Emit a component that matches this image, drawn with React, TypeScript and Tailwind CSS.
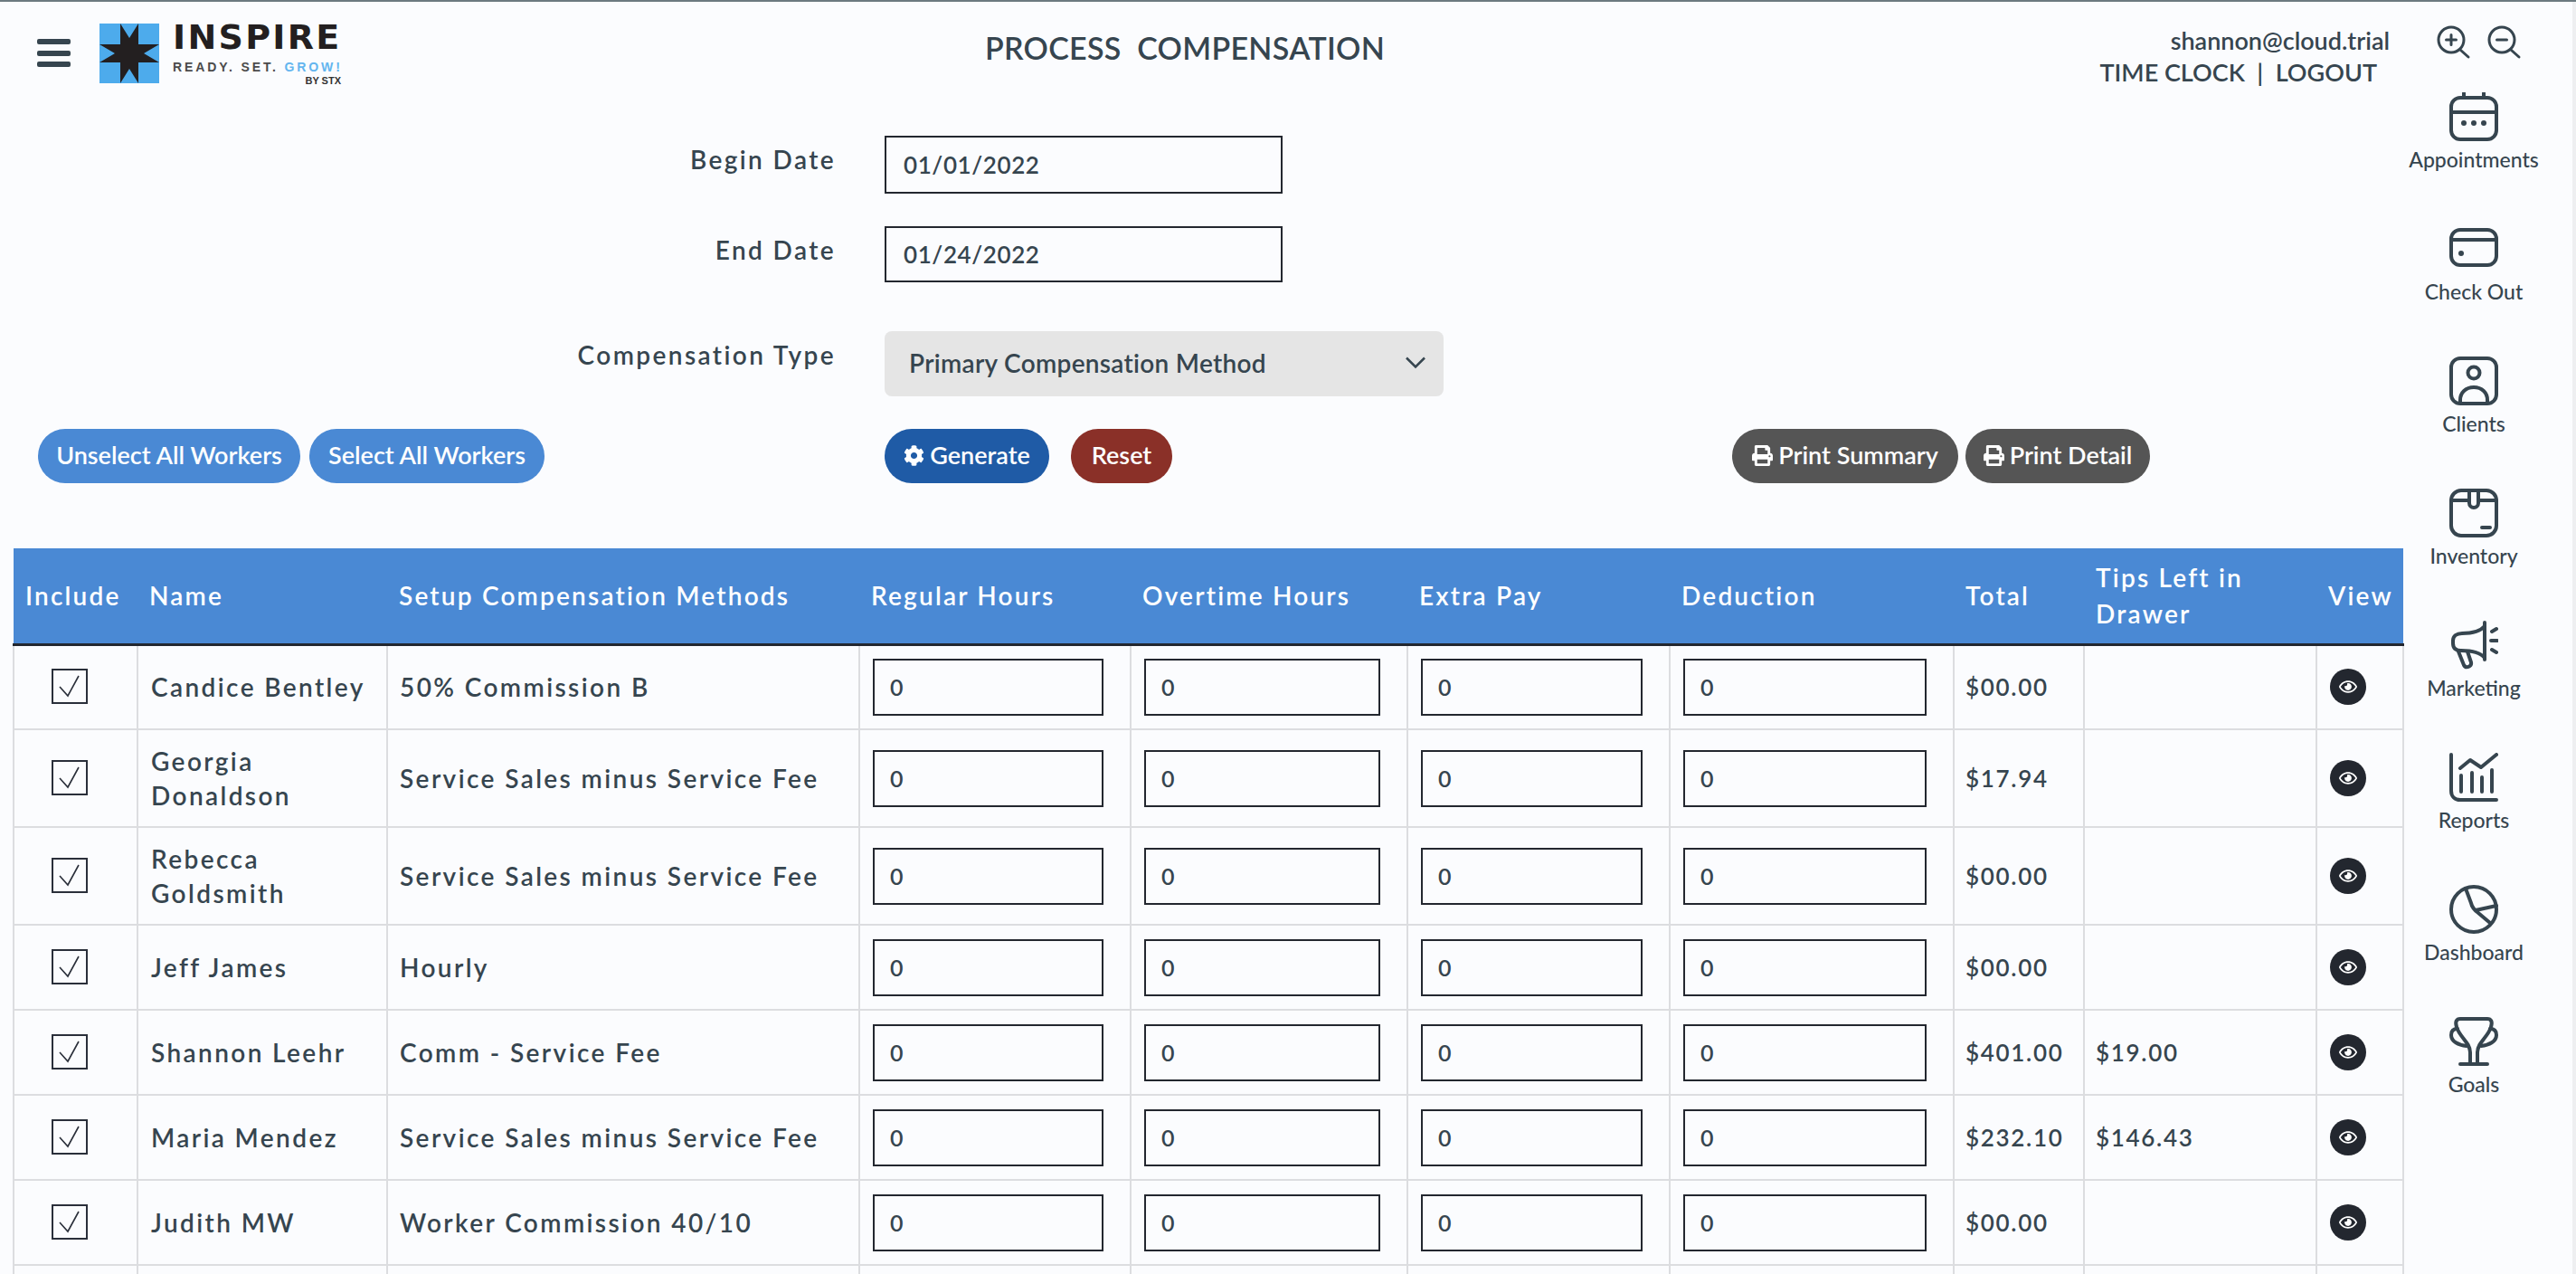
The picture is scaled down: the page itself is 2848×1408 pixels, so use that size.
import { FaCog, FaPrint, FaRegEye } from 'react-icons/fa';

interface Row {
  name: string;
  method: string;
  total: string;
  tips?: string;
}

const ROWS: Row[] = [
  { name: 'Candice Bentley', method: '50% Commission B', total: '$00.00' },
  { name: 'Georgia Donaldson', method: 'Service Sales minus Service Fee', total: '$17.94' },
  { name: 'Rebecca Goldsmith', method: 'Service Sales minus Service Fee', total: '$00.00' },
  { name: 'Jeff James', method: 'Hourly', total: '$00.00' },
  { name: 'Shannon Leehr', method: 'Comm - Service Fee', total: '$401.00', tips: '$19.00' },
  { name: 'Maria Mendez', method: 'Service Sales minus Service Fee', total: '$232.10', tips: '$146.43' },
  { name: 'Judith MW', method: 'Worker Commission 40/10', total: '$00.00' },
];

const COLUMNS = [137, 276, 522, 300, 306, 290, 314, 144, 257, 96];
const HEADERS = ['Include', 'Name', 'Setup Compensation Methods', 'Regular Hours', 'Overtime Hours', 'Extra Pay', 'Deduction', 'Total', 'Tips Left in Drawer', 'View'];

const RAIL = [
  {
    label: 'Appointments',
    icon: (
      <>
        <rect x="2" y="6" width="50" height="46" rx="10" />
        <path d="M2 22h50M16 1v5M38 1v5" />
        <circle cx="16" cy="34" r="3" fill="#36454f" stroke="none" />
        <circle cx="27" cy="34" r="3" fill="#36454f" stroke="none" />
        <circle cx="38" cy="34" r="3" fill="#36454f" stroke="none" />
      </>
    ),
  },
  {
    label: 'Check Out',
    icon: (
      <>
        <rect x="2" y="6" width="50" height="39" rx="10" />
        <path d="M2 17h50" />
        <circle cx="13" cy="32" r="3" fill="#36454f" stroke="none" />
      </>
    ),
  },
  {
    label: 'Clients',
    icon: (
      <>
        <rect x="2" y="2" width="50" height="50" rx="10" />
        <circle cx="27" cy="18" r="6.5" />
        <path d="M12 51v-3c0-8 6-14 15-14s15 6 15 14v3" />
      </>
    ),
  },
  {
    label: 'Inventory',
    icon: (
      <>
        <rect x="2" y="2" width="50" height="50" rx="11" />
        <path d="M2 13h20M32 13h20M22 2v14a5 5 0 0 0 10 0V2M36 43h9" />
      </>
    ),
  },
  {
    label: 'Marketing',
    icon: (
      <>
        <path d="M39 2v41M39 6c-5 6-13 8-25 8-6 0-10 3-10 8v3c0 5 3 8 9 8 12 0 21 2 26 8" />
        <path d="M10 34l6 15c2 4 9 2 8-3l-4-12M47 12l5-3M46 22h7M47 32l5 3" />
      </>
    ),
  },
  {
    label: 'Reports',
    icon: (
      <>
        <path d="M2 2v40c0 6 4 10 10 10h40" />
        <path d="M13 25v18M25 22v21M36 27v16M47 19v24" />
        <path d="M12 17l11-9 12 8L52 2" />
      </>
    ),
  },
  {
    label: 'Dashboard',
    icon: (
      <>
        <circle cx="27" cy="27" r="25" />
        <path d="M18 4l6 16c1 5 4 8 8 11l13 11M29 28l23-5" />
      </>
    ),
  },
  {
    label: 'Goals',
    icon: (
      <>
        <path d="M23 50V39C23 28 11 22 8 11c-2-6 0-9 4-9h30c4 0 6 3 4 9-3 11-15 17-15 28v11" />
        <path d="M9 13c-5 0-7 3-7 7 0 7 8 11 17 12M45 13c5 0 7 3 7 7 0 7-8 11-17 12M12 52h30" />
      </>
    ),
  },
];

function Magnifier({ minus }: { minus?: boolean }) {
  return (
    <svg width="38" height="38" viewBox="0 0 38 38" fill="none" stroke="#36454f" strokeWidth="3" strokeLinecap="round">
      <circle cx="16" cy="16" r="14" />
      <path d="M26 27l9 8" />
      <path d={minus ? 'M10.5 16h11' : 'M10.5 16h11M16 10.5v11'} />
    </svg>
  );
}

function Logo() {
  return (
    <div className="flex items-start">
      <svg width="66" height="66" viewBox="0 0 66 66">
        <rect width="66" height="66" fill="#4dabec" />
        <path d="M23 0L33 16L43 0V23L66 23L49 33L66 43H43V66L33 50L23 66V43H0L17 33L0 23H23Z" fill="#231f20" />
      </svg>
      <div className="ml-[15px] w-[186px] [font-family:'Liberation_Sans',sans-serif]">
        <div className="text-[38px] leading-[30px] font-bold tracking-[2.3px] whitespace-nowrap text-[#231f20] [font-family:'DejaVu_Sans',sans-serif]">INSPIRE</div>
        <div className="mt-[11px] text-[14px] leading-[14px] font-bold tracking-[2.9px] whitespace-nowrap text-[#4b4b4b]">
          READY. SET. <span className="text-[#63b5ef]">GROW!</span>
        </div>
        <div className="mt-[2px] text-right text-[11px] leading-[12px] font-bold text-[#333333]">BY STX</div>
      </div>
    </div>
  );
}

function Pill({ className, children }: { className: string; children: React.ReactNode }) {
  return (
    <button className={`flex h-[60px] items-center justify-center gap-[6px] rounded-[30px] pb-[2px] text-[27px] font-semibold text-white ${className}`}>
      {children}
    </button>
  );
}

function FormRow({ label, className, children }: { label: string; className: string; children: React.ReactNode }) {
  return (
    <div className={`flex ${className}`}>
      <label className="w-[910px] text-right text-[28px] leading-[32px] font-semibold tracking-[2.4px]">{label}</label>
      <div className="ml-[54px]">{children}</div>
    </div>
  );
}

export default function App() {
  return (
    <div className="flex h-[1408px] overflow-hidden border-t-2 border-[#6c7a80] bg-[#fbfcfe] text-[#36454f] [font-family:Lato,sans-serif]">
      <main className="w-[2658px] pl-[14px]">
        <header className="flex h-[148px]">
          <div className="flex w-[876px] pt-[24px] pl-[27px]">
            <div className="mt-[17px] flex h-[31px] w-[37px] flex-col justify-between">
              <div className="h-[6px] rounded-[2px] bg-[#36454f]" />
              <div className="h-[6px] rounded-[2px] bg-[#36454f]" />
              <div className="h-[6px] rounded-[2px] bg-[#36454f]" />
            </div>
            <div className="ml-[32px]">
              <Logo />
            </div>
          </div>
          <h1 className="w-[840px] pt-[30px] text-center text-[34px] leading-[42px] font-semibold tracking-[0.3px] whitespace-pre">PROCESS  COMPENSATION</h1>
          <div className="flex-1 pt-[25px] pr-[16px] text-right text-[27px] leading-[35px] font-semibold">
            <div>shannon@cloud.trial</div>
            <div className="mr-[14px] whitespace-pre">TIME CLOCK  |  LOGOUT</div>
          </div>
        </header>

        <FormRow label="Begin Date" className="h-[100px] pt-[10px]">
          <input readOnly value="01/01/2022" className="-mt-[10px] h-[64px] w-[440px] border-2 border-[#23272f] bg-transparent px-[19px] text-[26px] font-semibold tracking-[0.6px] outline-none" />
        </FormRow>
        <FormRow label="End Date" className="h-[116px] pt-[10px]">
          <input readOnly value="01/24/2022" className="-mt-[10px] h-[62px] w-[440px] border-2 border-[#23272f] bg-transparent px-[19px] text-[26px] font-semibold tracking-[0.6px] outline-none" />
        </FormRow>
        <FormRow label="Compensation Type" className="h-[108px] pt-[10px]">
          <div className="-mt-[10px] flex h-[72px] w-[618px] items-center justify-between rounded-[8px] bg-[#e5e5e5] pr-[20px] pb-[2px] pl-[27px] text-[28px] font-semibold tracking-[0.3px]">
            Primary Compensation Method
            <svg width="22" height="14" viewBox="0 0 22 14" fill="none" stroke="#36454f" strokeWidth="2.5">
              <path d="M1 1.5l10 10 10-10" />
            </svg>
          </div>
        </FormRow>

        <div className="flex h-[132px]">
          <div className="flex w-[964px] gap-[10px] pl-[28px]">
            <Pill className="w-[290px] bg-[#4a89d4]">Unselect All Workers</Pill>
            <Pill className="w-[260px] bg-[#4a89d4]">Select All Workers</Pill>
          </div>
          <Pill className="w-[182px] bg-[#1f5ba6]">
            <FaCog size={23} />
            Generate
          </Pill>
          <Pill className="ml-[24px] w-[112px] bg-[#8a3028]">Reset</Pill>
          <div className="ml-[619px] flex gap-[8px]">
            <Pill className="w-[250px] bg-[#555555]">
              <FaPrint size={23} />
              Print Summary
            </Pill>
            <Pill className="w-[204px] bg-[#555555]">
              <FaPrint size={23} />
              Print Detail
            </Pill>
          </div>
        </div>

        <table className="w-[2642px] table-fixed border-collapse text-[28px] font-semibold tracking-[2.4px]">
          <colgroup>
            {COLUMNS.map((w, i) => (
              <col key={i} style={{ width: w }} />
            ))}
          </colgroup>
          <thead>
            <tr className="h-[106px] border-b-[3px] border-[#23272f] bg-[#4a89d4] text-white">
              {HEADERS.map((h) => (
                <th key={h} className="pl-[13px] text-left leading-[40px] font-semibold tracking-[2.2px]">
                  {h}
                </th>
              ))}
            </tr>
          </thead>
          <tbody>
            {ROWS.map((r) => (
              <tr key={r.name} className="h-[94px]">
                <td className="border-2 border-[#dcdde0] pl-[41px]">
                  <span className="mb-[2px] flex h-[39px] w-[40px] items-center justify-center border-2 border-[#2a2f3a]">
                    <svg width="28" height="28" viewBox="0 0 28 28" fill="none" stroke="#2a2f3a" strokeWidth="1.6">
                      <path d="M3 15l9 10L24 3" />
                    </svg>
                  </span>
                </td>
                <td className="border-2 border-[#dcdde0] py-[15px] pr-[15px] pl-[14px] leading-[38px]">{r.name}</td>
                <td className="border-2 border-[#dcdde0] pr-[15px] pl-[13px]">{r.method}</td>
                {[0, 1, 2, 3].map((i) => (
                  <td key={i} className="border-2 border-[#dcdde0] py-[13px] pr-[29px] pl-[14px]">
                    <input readOnly value="0" className="block h-[63px] w-full border-2 border-[#23272f] bg-transparent pr-[19px] pl-[17px] text-[25px] font-semibold outline-none" />
                  </td>
                ))}
                <td className="border-2 border-[#dcdde0] pl-[12px] text-[26px] tracking-[1.7px]">{r.total}</td>
                <td className="border-2 border-[#dcdde0] pl-[12px] text-[26px] tracking-[1.7px]">{r.tips}</td>
                <td className="border-2 border-[#dcdde0] pl-[14px]">
                  <span className="flex h-[40px] w-[40px] items-center justify-center rounded-full bg-[#23272f] text-white">
                    <FaRegEye size={20} />
                  </span>
                </td>
              </tr>
            ))}
            <tr className="h-[94px]">
              {COLUMNS.map((w) => (
                <td key={w} className="border-2 border-[#dcdde0]" />
              ))}
            </tr>
          </tbody>
        </table>
      </main>

      <aside className="flex-1">
        <div className="flex h-[64px] gap-[18px] pt-[26px] pl-[36px]">
          <Magnifier />
          <Magnifier minus />
        </div>
        <nav className="mt-[36px] w-[154px]">
          {RAIL.map((item) => (
            <div key={item.label} className="flex h-[146px] flex-col items-center">
              <svg width="54" height="54" viewBox="0 0 54 54" fill="none" stroke="#36454f" strokeWidth="4" strokeLinecap="round" strokeLinejoin="round">
                {item.icon}
              </svg>
              <span className="mt-[7px] text-[23px] leading-[26px] font-medium whitespace-nowrap">{item.label}</span>
            </div>
          ))}
        </nav>
      </aside>
      <div className="w-[4px] bg-[#eeeff1]" />
    </div>
  );
}
